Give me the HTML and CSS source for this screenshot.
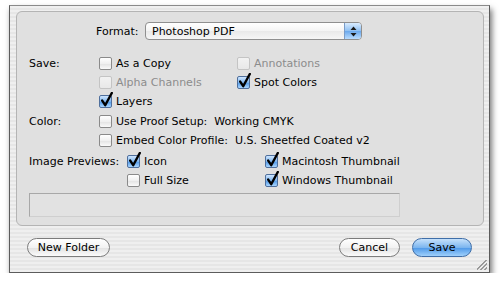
FILE: index.html
```html
<!DOCTYPE html>
<html lang="en">
<head>
    <meta charset="UTF-8">
    <title>Save Options</title>
    <link rel="stylesheet" href="styles.css">
</head>
<body>

    <div class="window">
        <div class="panel">
            <div class="format-row">
                <span class="format-label">Format:</span>
                <div class="popup">
                    <span class="popup-text">Photoshop PDF</span>
                    <span class="popup-arrows">
                        <svg width="7" height="11" viewBox="0 0 7 11"><path d="M3.5 0.5 L6.5 4 L0.5 4 Z M0.5 7 L6.5 7 L3.5 10.5 Z" fill="#1a1a1a"/></svg>
                    </span>
                </div>
            </div>

            <div class="section save-section">
                <span class="label">Save:</span>
                <div class="grid">
                    <label class="opt"><span class="check"></span>As a Copy</label>
                    <label class="opt disabled"><span class="check"></span>Annotations</label>
                    <label class="opt disabled"><span class="check"></span>Alpha Channels</label>
                    <label class="opt"><span class="check on"></span>Spot Colors</label>
                    <label class="opt"><span class="check on"></span>Layers</label>
                </div>
            </div>

            <div class="section color-section">
                <span class="label">Color:</span>
                <div class="stack">
                    <label class="opt"><span class="check"></span>Use Proof Setup:&nbsp; Working CMYK</label>
                    <label class="opt"><span class="check"></span>Embed Color Profile:&nbsp; U.S. Sheetfed Coated v2</label>
                </div>
            </div>

            <div class="section preview-section">
                <span class="label wide">Image Previews:</span>
                <div class="grid">
                    <label class="opt"><span class="check on"></span>Icon</label>
                    <label class="opt"><span class="check on"></span>Macintosh Thumbnail</label>
                    <label class="opt"><span class="check"></span>Full Size</label>
                    <label class="opt"><span class="check on"></span>Windows Thumbnail</label>
                </div>
            </div>

            <div class="message"></div>
        </div>

        <div class="buttons">
            <button class="pill">New Folder</button>
            <span class="spacer"></span>
            <button class="pill">Cancel</button>
            <button class="pill default">Save</button>
        </div>

        <span class="grip"></span>
    </div>

</body>
</html>
```

FILE: styles.css
```css
body {
    margin: 0;
    background-color: #fff;
    font-family: 'DejaVu Sans', sans-serif;
    font-size: 11px;
    color: #000;
}

.window {
    position: relative;
    box-sizing: border-box;
    margin: 5px 0 0 9px;
    width: 481px;
    height: 268px;
    border: 1px solid #5c5c5c;
    border-top-color: #8a8a8a;
    background-color: #ececec;
    background-image: repeating-linear-gradient(#efefef 0, #efefef 2px, #e6e6e6 2px, #e6e6e6 4px);
    box-shadow: 2px 4px 6px rgba(0, 0, 0, 0.55);
    padding: 5px 5px 0 6px;
}

.panel {
    box-sizing: border-box;
    height: 215px;
    border: 1px solid #b4b4b4;
    border-radius: 6px;
    background-color: #e0e0e0;
    padding: 10px 0 0 12px;
}

.format-row {
    display: flex;
    align-items: center;
    height: 18px;
    padding-left: 67px;
}

.format-label {
    width: 49px;
}

.popup {
    box-sizing: border-box;
    display: flex;
    align-items: center;
    width: 217px;
    height: 18px;
    border: 1px solid #8f8f8f;
    border-radius: 4px;
    background: linear-gradient(#ffffff, #f4f4f4 50%, #e9e9e9 51%, #f6f6f6);
    overflow: hidden;
}

.popup-text {
    flex: 1;
    padding-left: 6px;
}

.popup-arrows {
    display: flex;
    align-items: center;
    justify-content: center;
    width: 16px;
    height: 100%;
    border-left: 1px solid #7a9cc8;
    background: linear-gradient(#d9ecff, #8fc0f2 50%, #6aa8ec 51%, #b9dcff);
}

.section {
    display: flex;
}

.save-section {
    margin-top: 14px;
}

.color-section {
    margin-top: 1px;
}

.preview-section {
    margin-top: 2px;
}

.label {
    width: 70px;
    height: 19px;
    line-height: 19px;
}

.label.wide {
    width: 98px;
}

.grid {
    display: grid;
    grid-template-columns: 138px auto;
}

.stack {
    display: flex;
    flex-direction: column;
}

.opt {
    display: flex;
    align-items: center;
    height: 19px;
    white-space: nowrap;
}

.opt.disabled {
    color: #8c8c8c;
}

.check {
    position: relative;
    box-sizing: border-box;
    width: 13px;
    height: 13px;
    margin-right: 4px;
    border: 1px solid #8a8a8a;
    border-radius: 2px;
    background: linear-gradient(#ffffff, #f0f0f0 50%, #e2e2e2 51%, #fafafa);
}

.disabled .check {
    border-color: #c4c4c4;
    background: linear-gradient(#f2f2f2, #e8e8e8);
}

.check.on {
    border-color: #4f6f9c;
    background: linear-gradient(#cfe6ff, #7fb6ef 50%, #4f97e6 51%, #a9d6ff);
}

.check.on::after {
    content: '';
    position: absolute;
    left: 1px;
    top: -4px;
    width: 12px;
    height: 15px;
    background: url("data:image/svg+xml,%3Csvg xmlns='http://www.w3.org/2000/svg' width='12' height='15' viewBox='0 0 12 15'%3E%3Cpath d='M1.2 8.6 L4.2 13.2 L10.8 1' fill='none' stroke='%23000' stroke-width='2.4' stroke-linecap='round' stroke-linejoin='round'/%3E%3C/svg%3E") no-repeat;
}

.message {
    box-sizing: border-box;
    width: 371px;
    height: 24px;
    margin-top: 3px;
    border: 1px solid #a8a8a8;
    border-bottom-color: #cfcfcf;
    border-right-color: #cfcfcf;
    background-color: #e2e2e2;
}

.buttons {
    display: flex;
    align-items: center;
    gap: 12px;
    margin-top: 12px;
    padding: 0 12px 0 11px;
}

.spacer {
    flex: 1;
}

.pill {
    box-sizing: border-box;
    height: 19px;
    padding: 0;
    white-space: nowrap;
    border: 1px solid #7c7c7c;
    border-radius: 10px;
    font-family: 'DejaVu Sans', sans-serif;
    font-size: 11px;
    color: #000;
    background: linear-gradient(#ffffff, #f2f2f2 50%, #e1e1e1 51%, #fbfbfb);
}

.pill:nth-of-type(1) {
    width: 83px;
}

.pill:nth-of-type(2) {
    width: 61px;
}

.pill.default {
    width: 60px;
    border-color: #3f6ea8;
    background: linear-gradient(#c6e1fb, #7db6ef 50%, #4c97e8 51%, #9fd0fb);
}

.grip {
    position: absolute;
    right: 2px;
    bottom: 2px;
    width: 10px;
    height: 10px;
    background: linear-gradient(135deg, transparent 45%, #9a9a9a 45%, #9a9a9a 52%, transparent 52%, transparent 65%, #9a9a9a 65%, #9a9a9a 72%, transparent 72%, transparent 85%, #9a9a9a 85%, #9a9a9a 92%, transparent 92%);
}
```
